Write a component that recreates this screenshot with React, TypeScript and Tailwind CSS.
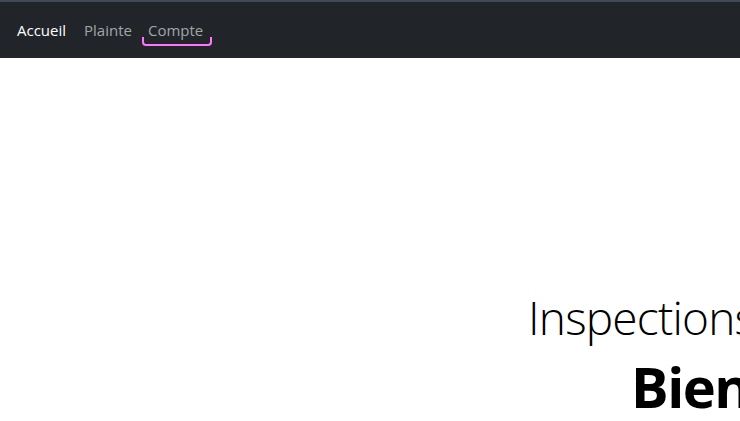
import React from "react";

export default function App() {
  return (
    <div className="w-[740px] h-[421px] overflow-hidden bg-white" style={{ fontFamily: '"Open Sans", "Noto Sans", sans-serif' }}>
      <nav className="h-[58px] bg-[#212529] border-t-2 border-[#444a55] flex items-center pl-[17px] text-[15px]">
        <span className="text-white">Accueil</span>
        <span className="ml-[18px] text-[#a2a5a8]">Plainte</span>
        <span className="ml-[10px] relative pl-[6px] pr-[9px] text-[#a2a5a8]">
          Compte
          <span className="absolute left-0 right-0 top-[18px] h-[9px] border-2 border-t-0 border-[#ff73ff] rounded-b-[4px]"></span>
        </span>
      </nav>
      <div className="pt-[229px] whitespace-nowrap">
        <div className="pl-[528px] text-[46px] font-light leading-[60px] tracking-[-0.8px] text-black">Inspections Système</div>
        <div className="pl-[631px] pt-[4px] text-[56px] font-bold leading-[70px] tracking-[-1.5px] text-black">Bienvenue</div>
      </div>
    </div>
  );
}
